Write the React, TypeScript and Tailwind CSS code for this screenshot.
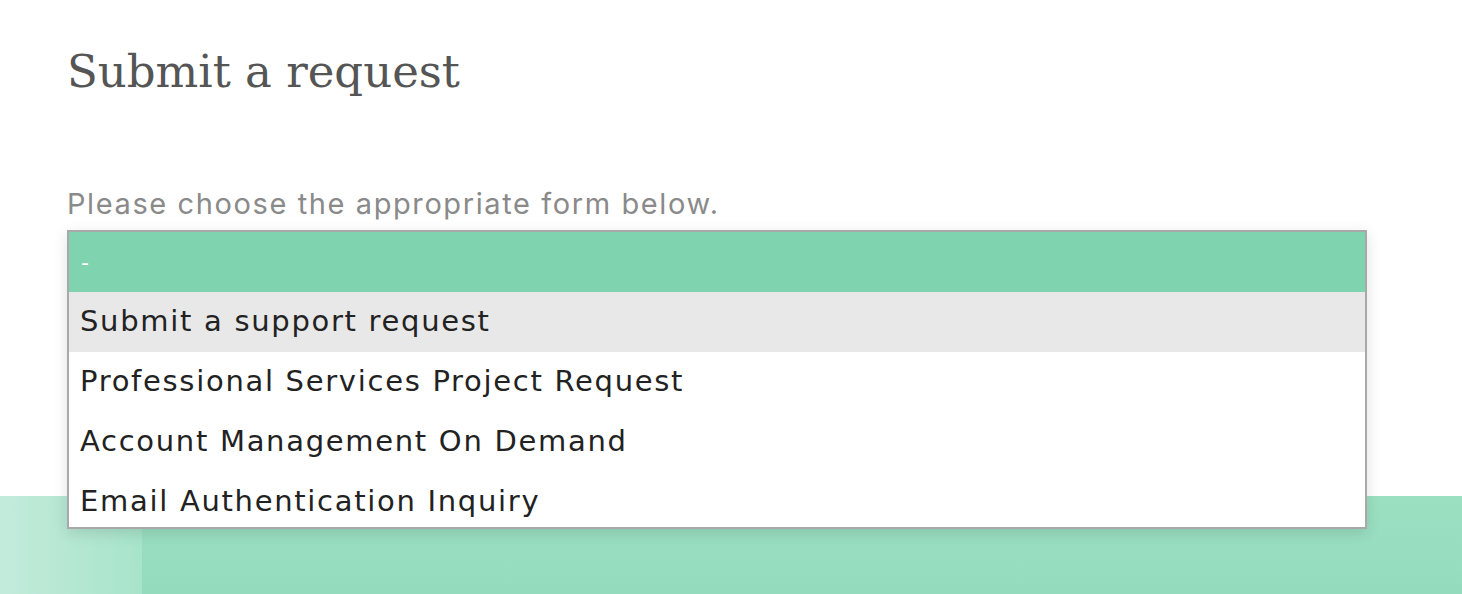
export default function App() {
  const options = [
    'Submit a support request',
    'Professional Services Project Request',
    'Account Management On Demand',
    'Email Authentication Inquiry',
  ]

  return (
    <div className="relative h-[594px] w-[1462px] overflow-hidden bg-white">
      {/* Green band at the bottom of the page */}
      <div aria-hidden className="absolute inset-x-0 bottom-0 flex h-[98px] bg-gradient-to-b from-[#9ce0c2] to-[#94dbbd]">
        <div className="h-full w-[142px] bg-gradient-to-r from-[#c3ebdb] to-[#a7e4ca]" />
      </div>

      <div className="relative z-10 px-[67px] pt-[40px]">
        <h1 className="text-[45px] leading-[64px] text-[#555555] [font-family:'DejaVu_Serif',serif]">
          Submit a request
        </h1>

        <p className="mt-[82px] text-[29px] leading-[36px] tracking-[1.6px] text-[#8a8a8a] [font-family:Inter,sans-serif]">
          Please choose the appropriate form below.
        </p>

        <div className="mt-[8px] w-[1300px] border-2 border-[#a9a9a9] bg-white shadow-[0_4px_14px_rgba(0,0,0,0.12)] [font-family:'DejaVu_Sans',sans-serif]">
          <div className="h-[295px] overflow-hidden">
            <div className="flex h-[60px] items-center bg-[#7fd3ae] px-[12px] text-[22px] text-white">-</div>
            {options.map((o, i) => (
              <div
                key={o}
                className={`flex h-[60px] items-center px-[11px] text-[29px] tracking-[1.7px] text-[#222222] ${i === 0 ? 'bg-[#e8e8e8]' : 'bg-white'}`}
              >
                {o}
              </div>
            ))}
          </div>
        </div>
      </div>
    </div>
  )
}
